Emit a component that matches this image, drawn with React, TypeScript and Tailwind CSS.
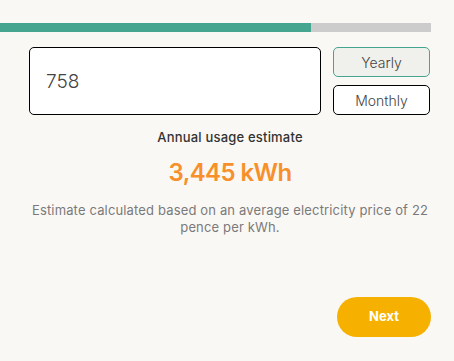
import React, { useState } from 'react';

const App = () => {
  const [usage, setUsage] = useState('758');
  const [period, setPeriod] = useState<'yearly' | 'monthly'>('yearly');

  return (
    <div
      className="w-[454px] h-[361px] bg-[#faf8f5] overflow-hidden"
      style={{ fontFamily: 'Inter, "Noto Sans", sans-serif' }}
    >
      {/* progress */}
      <div className="pt-[23px] w-[431px]">
        <div className="h-[9px] bg-[#cccccc]">
          <div className="h-full w-[311px] bg-[#45a58f]" />
        </div>
      </div>

      <div className="pl-[29px] pr-[23px] pt-[15px]">
        <div className="flex gap-[12px]">
          <div className="w-[292px] h-[68px] rounded-[5px] border border-black bg-white flex items-center px-[16px] pt-[3px]">
            <input
              value={usage}
              onChange={e => setUsage(e.target.value)}
              className="w-full outline-none text-[19px] font-light text-[#444] bg-transparent"
            />
          </div>
          <div className="flex flex-col gap-[8px]">
            <button
              onClick={() => setPeriod('yearly')}
              className={`w-[97px] h-[30px] rounded-[5px] border text-[14px] font-light text-[#444] ${
                period === 'yearly' ? 'border-[#45a58f] bg-[#f0f0ec]' : 'border-black bg-white'
              }`}
            >
              Yearly
            </button>
            <button
              onClick={() => setPeriod('monthly')}
              className={`w-[97px] h-[30px] rounded-[5px] border text-[14px] font-light text-[#444] ${
                period === 'monthly' ? 'border-[#45a58f] bg-[#f0f0ec]' : 'border-black bg-white'
              }`}
            >
              Monthly
            </button>
          </div>
        </div>

        <div className="flex flex-col items-center text-center">
          <div className="mt-[13px] text-[13px] font-medium text-[#333] leading-[18px] tracking-[0.2px]">
            Annual usage estimate
          </div>
          <div className="mt-[12px] text-[24px] font-semibold text-[#f7902a] leading-[30px] tracking-[-0.6px]">
            3,445 kWh
          </div>
          <p className="mt-[14px] -mx-[6px] text-[13px] text-[#7a7a7a] leading-[17px] tracking-[0.15px]">
            Estimate calculated based on an average electricity price of 22 pence per kWh.
          </p>
        </div>

        <div className="flex justify-end mt-[61px]">
          <button className="w-[94px] h-[40px] rounded-full bg-[#f6b100] text-white text-[13px] font-bold">
            Next
          </button>
        </div>
      </div>
    </div>
  );
};

export default App;
